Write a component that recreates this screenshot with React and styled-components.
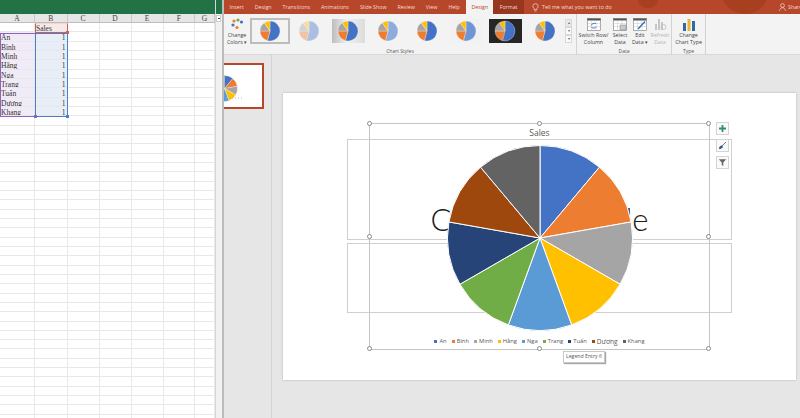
import styled, { createGlobalStyle } from "styled-components";

const GlobalStyle = createGlobalStyle`
html, body { margin: 0; padding: 0; background: #fff; }
body { width: 800px; height: 418px; overflow: hidden; font-family: "Open Sans", "Liberation Sans", sans-serif; }
`;

const Page = styled.div`
display: flex;
width: 800px;
height: 418px;
overflow: hidden;
`;

/* ---------- excel side ---------- */
const Excel = styled.div`
width: 215px;
flex: none;
display: flex;
flex-direction: column;
`;
const TitleBar = styled.div`
height: 14px;
background: #217346;
flex: none;
`;
const Row = styled.div`
display: flex;
flex: none;
height: ${(p) => p.$h || 9.33}px;
box-sizing: border-box;
`;
const HeadCell = styled.div`
width: ${(p) => p.$w}px;
flex: none;
box-sizing: border-box;
background: #e6e6e6;
border-right: 1px solid #c8c8c8;
border-bottom: 1px solid #bdbdbd;
color: #444;
font: 7.5px/9px "Liberation Serif", serif;
text-align: center;
`;
const Cell = styled.div`
width: ${(p) => p.$w}px;
flex: none;
box-sizing: border-box;
border-right: 1px solid #e8e8e8;
border-bottom: 1px solid #e8e8e8;
background: ${(p) => p.$bg || "#fff"};
color: #333;
font: 7.5px/9px "Liberation Serif", serif;
text-align: ${(p) => (p.$num ? "right" : "left")};
padding: 1px 1px 0;
white-space: nowrap;
overflow: hidden;
`;
const RangeMark = styled.div`
position: absolute;
box-sizing: border-box;
left: ${(p) => p.$x}px;
top: ${(p) => p.$y}px;
width: ${(p) => p.$w}px;
height: ${(p) => p.$h}px;
border: 1px solid ${(p) => p.$c};
border-top-color: ${(p) => p.$top || p.$c};
pointer-events: none;
&::after {
  content: "";
  position: absolute;
  right: -2px;
  bottom: -2px;
  width: 3px;
  height: 3px;
  background: ${(p) => p.$c};
}
`;
const Sheet = styled.div`
position: relative;
flex: 1;
overflow: hidden;
`;
const ScrollStrip = styled.div`
width: 9px;
flex: none;
box-sizing: border-box;
background: #f1f1f1;
border-right: 2px solid #bcbcbc;
border-left: 1px solid #d6d6d6;
padding-top: 15px;
background-image: linear-gradient(#217346 14px, transparent 14px);
`;
const CollapseBtn = styled.div`
width: 5px;
height: 7px;
background: #fff;
border: 1px solid #ccc;
box-sizing: border-box;
position: relative;
&::after { content: ""; position: absolute; left: 1px; top: 2px; width: 2px; height: 1px; background: #444; }
`;

/* ---------- powerpoint side ---------- */
const Ppt = styled.div`
flex: 1;
display: flex;
flex-direction: column;
min-width: 0;
`;
const TabBar = styled.div`
height: 14px;
flex: none;
background: #b7472a;
display: flex;
align-items: stretch;
position: relative;
overflow: hidden;
`;
const Tab = styled.div`
position: relative;
padding: 0 ${(p) => p.$pad ?? 6}px;
margin-left: ${(p) => p.$gap ?? 0}px;
font-size: 5.3px;
line-height: 15px;
color: ${(p) => (p.$active ? "#b7472a" : "#f6dcd3")};
background: ${(p) => (p.$active ? "#f3f3f3" : p.$dark ? "#97371f" : "transparent")};
white-space: nowrap;
`;
const TellMe = styled.div`
position: relative;
display: flex;
align-items: center;
gap: 3px;
margin-left: 8px;
font-size: 5.3px;
color: #f6dcd3;
`;
const ShareBox = styled.div`
position: absolute;
left: 555px;
top: 0;
height: 14px;
display: flex;
align-items: center;
gap: 2px;
font-size: 5.3px;
color: #f6dcd3;
`;
const Ornament = styled.div`
position: absolute;
left: ${(p) => p.$x}px;
top: ${(p) => p.$y}px;
width: ${(p) => p.$s}px;
height: ${(p) => p.$s}px;
border-radius: 50%;
background: #a8401f;
`;
const Ribbon = styled.div`
height: 41px;
flex: none;
background: #f3f3f3;
border-bottom: 1px solid #d8d8d8;
box-sizing: border-box;
display: flex;
`;
const Group = styled.div`
width: ${(p) => p.$w}px;
flex: none;
box-sizing: border-box;
border-right: 1px solid #d2d2d2;
padding-top: 1px;
display: flex;
flex-direction: column;
`;
const GroupBody = styled.div`
height: 33px;
flex: none;
display: flex;
align-items: flex-start;
`;
const GroupLabel = styled.div`
font-size: 5px;
line-height: 6px;
color: #555;
text-align: center;
`;
const Big = styled.div`
width: ${(p) => p.$w}px;
flex: none;
display: flex;
flex-direction: column;
align-items: center;
padding-top: 3px;
color: ${(p) => (p.$off ? "#b5b5b5" : "#444")};
font-size: 5.3px;
line-height: 7px;
text-align: center;
white-space: nowrap;
& > svg { margin-bottom: 1px; }
`;
const Gallery = styled.div`
display: flex;
flex: 1;
height: 25px;
margin-top: 3px;
align-items: center;
`;
const StyleSlot = styled.div`
width: 39.3px;
flex: none;
display: flex;
justify-content: center;
`;
const StyleThumb = styled.div`
width: ${(p) => p.$w || 33}px;
height: 24px;
flex: none;
box-sizing: border-box;
display: flex;
align-items: center;
justify-content: center;
background: ${(p) => p.$bg || "transparent"};
border: ${(p) => (p.$selected ? "1px solid #bdbdbd" : "none")};
outline: ${(p) => (p.$selected ? "1px solid #bdbdbd" : "none")};
`;
const GalleryScroll = styled.div`
width: 7px;
flex: none;
display: flex;
flex-direction: column;
margin-left: 1px;
`;
const ScrollKey = styled.div`
height: 8px;
box-sizing: border-box;
border: 1px solid #d8d8d8;
background: ${(p) => (p.$dim ? "#e9e9e9" : "#fafafa")};
color: #666;
font-size: 4px;
line-height: 6px;
text-align: center;
`;
const Work = styled.div`
flex: 1;
display: flex;
background: #e6e6e6;
min-height: 0;
`;
const Thumbs = styled.div`
width: 48px;
flex: none;
box-sizing: border-box;
border-right: 1px solid #d4d4d4;
padding-top: 8px;
`;
const ThumbSlide = styled.div`
width: 40px;
height: 46px;
box-sizing: border-box;
background: #fff;
border: 2px solid #b7472a;
border-left: none;
overflow: hidden;
display: flex;
`;
const Canvas = styled.div`
flex: 1;
padding: 38px 4px 0 11px;
`;
const Slide = styled.div`
position: relative;
width: 513px;
height: 287px;
background: #fff;
box-shadow: 0 0 2px rgba(0, 0, 0, 0.25);
`;
const Placeholder = styled.div`
position: absolute;
box-sizing: border-box;
left: 64px;
top: ${(p) => p.$y}px;
width: 385px;
height: ${(p) => p.$h}px;
border: 1px solid #cfcfcf;
display: flex;
align-items: flex-end;
justify-content: center;
overflow: hidden;
color: #1c1c1c;
font-family: Lato, "Open Sans", sans-serif;
font-weight: 300;
font-size: 31px;
line-height: 36px;
padding-bottom: 2px;
white-space: nowrap;
`;
const ChartBox = styled.div`
position: absolute;
left: 86px;
top: 30px;
width: 341px;
height: 227px;
box-sizing: border-box;
border: 1px solid #c4c4c4;
display: flex;
flex-direction: column;
align-items: center;
`;
const ChartTitle = styled.div`
font-size: 8.5px;
line-height: 12px;
margin-top: 3px;
color: #595959;
`;
const PieWrap = styled.svg`
display: block;
margin-top: 6px;
flex: none;
`;
const Legend = styled.div`
display: flex;
align-items: center;
justify-content: center;
gap: 5px;
margin-top: 6px;
font-size: 5.8px;
line-height: 9px;
color: #595959;
`;
const LegendItem = styled.div`
display: flex;
align-items: center;
gap: 2px;
font-size: ${(p) => (p.$big ? "6.6px" : "inherit")};
`;
const Swatch = styled.span`
width: 3px;
height: 3px;
background: ${(p) => p.$c};
`;
const Handle = styled.div`
position: absolute;
left: ${(p) => p.$x}%;
top: ${(p) => p.$y}%;
width: 5px;
height: 5px;
margin: -3px 0 0 -3px;
box-sizing: border-box;
border: 1px solid #8a8a8a;
border-radius: 50%;
background: #fff;
`;
const SideButtons = styled.div`
position: absolute;
left: 433px;
top: 29px;
display: flex;
flex-direction: column;
gap: 4px;
`;
const SideBtn = styled.div`
width: 13px;
height: 13px;
box-sizing: border-box;
background: #fafafa;
border: 1px solid #d4d4d4;
display: flex;
align-items: center;
justify-content: center;
`;
const Tooltip = styled.div`
position: absolute;
left: 280px;
top: 258px;
height: 10px;
padding: 0 2px;
background: #fff;
border: 1px solid #c8c8c8;
box-shadow: 1px 1px 1px rgba(0, 0, 0, 0.35);
font-size: 5.2px;
line-height: 9px;
color: #555;
white-space: nowrap;
`;

const COLORS = ["#4472C4", "#ED7D31", "#A5A5A5", "#FFC000", "#5B9BD5", "#70AD47", "#264478", "#9E480E", "#636363"];
const NAMES = ["An", "Bình", "Minh", "Hằng", "Nga", "Trang", "Tuấn", "Dương", "Khang"];
const COLS = [["A", 35], ["B", 32.5], ["C", 32], ["D", 32], ["E", 32], ["F", 31.5], ["G", 20]];

function sector(cx, cy, r, from, to) {
  const a = ((from - 90) * Math.PI) / 180;
  const b = ((to - 90) * Math.PI) / 180;
  const large = to - from > 180 ? 1 : 0;
  return `M${cx} ${cy}L${cx + r * Math.cos(a)} ${cy + r * Math.sin(a)}A${r} ${r} 0 ${large} 1 ${cx + r * Math.cos(b)} ${cy + r * Math.sin(b)}Z`;
}

function NinePie({ size, stroke }) {
  const c = size / 2;
  return (
    <>
      {COLORS.map((col, i) => (
        <path key={col} d={sector(c, c, c - 0.5, i * 40, (i + 1) * 40)} fill={col} stroke="#fff" strokeWidth={stroke} />
      ))}
    </>
  );
}

function MiniPie({ faded, tone = "#4472C4", r = 10 }) {
  const c = r + 1;
  const parts = [
    [0, 195, tone],
    [195, 270, "#ED7D31"],
    [270, 325, "#A5A5A5"],
    [325, 360, "#FFC000"],
  ];
  return (
    <svg width={c * 2} height={c * 2} style={{ opacity: faded ? 0.4 : 1 }}>
      {parts.map(([a, b, col]) => (
        <path key={a} d={sector(c, c, r, a, b)} fill={col} stroke="#fff" strokeWidth="0.3" />
      ))}
    </svg>
  );
}

function SheetIcon({ children }) {
  return (
    <svg width="14" height="13" viewBox="0 0 14 13">
      <rect x="0.5" y="0.5" width="13" height="12" fill="#fff" stroke="#777" strokeWidth="0.6" />
      <rect x="0.5" y="0.5" width="13" height="2" fill="#555" />
      <path d="M0.5 5.5h13M0.5 8.5h13M4.5 2.5v10M9 2.5v10" stroke="#bbb" strokeWidth="0.4" />
      {children}
    </svg>
  );
}

function App() {
  const rows = Array.from({ length: 43 });
  const thumbs = [
    { selected: true, w: 38 },
    { faded: true },
    { bg: "linear-gradient(90deg,#bdbdbd,#f0f0f0 45%,#dcdcdc)" },
    { tone: "#8faadc" },
    {},
    { bg: "#f1f1f1", tone: "#6f95d4" },
    { bg: "#262626" },
    {},
  ];
  return (
    <Page>
      <GlobalStyle />
      <Excel>
        <TitleBar />
        <Row $h={9}>
          {COLS.map(([n, w]) => (
            <HeadCell key={n} $w={w}>{n}</HeadCell>
          ))}
        </Row>
        <Sheet>
          {rows.map((_, r) => (
            <Row key={r}>
              {COLS.map(([n, w], c) => {
                const name = NAMES[r - 1];
                let text = "";
                let bg;
                if (r === 0 && c === 1) { text = "Sales"; bg = "#f8e8e6"; }
                if (name && c === 0) { text = name; bg = "#f1ebf7"; }
                if (name && c === 1) { text = "1"; bg = "#e7eef8"; }
                return (
                  <Cell key={n} $w={w} $bg={bg} $num={c === 1 && r > 0}>{text}</Cell>
                );
              })}
            </Row>
          ))}
          <RangeMark $x={0} $y={9.5} $w={35.5} $h={84.5} $c="#8e63c2" />
          <RangeMark $x={35} $y={9.5} $w={33} $h={84.5} $c="#4a7ec9" />
          <RangeMark $x={35} $y={0} $w={33} $h={10} $c="#c9605c" $top="#f3d5d2" />
        </Sheet>
      </Excel>
      <ScrollStrip><CollapseBtn /></ScrollStrip>
      <Ppt>
        <TabBar>
          <Ornament $x={413} $y={-14} $s={22} />
          <Ornament $x={497} $y={-34} $s={48} />
          {["Insert", "Design", "Transitions", "Animations", "Slide Show", "Review", "View", "Help"].map((t) => (
            <Tab key={t} $pad={5.5}>{t}</Tab>
          ))}
          <Tab $active $pad={5} $gap={1}>Design</Tab>
          <Tab $dark $pad={6.5}>Format</Tab>
          <TellMe>
            <svg width="7" height="9" viewBox="0 0 7 9">
              <path d="M3.5.6a2.6 2.6 0 0 0-1.4 4.8v1.2h2.8V5.4A2.6 2.6 0 0 0 3.5.6zM2.4 8h2.2" fill="none" stroke="#f6dcd3" strokeWidth="0.7" />
            </svg>
            Tell me what you want to do
          </TellMe>
          <ShareBox>
            <svg width="7" height="8" viewBox="0 0 7 8">
              <circle cx="3.5" cy="2.5" r="1.9" fill="none" stroke="#f6dcd3" strokeWidth="0.7" />
              <path d="M.5 7.8c.3-2 1.4-3 3-3s2.7 1 3 3" fill="none" stroke="#f6dcd3" strokeWidth="0.7" />
            </svg>
            Share
          </ShareBox>
        </TabBar>
        <Ribbon>
          <Group $w={353}>
            <GroupBody>
              <Big $w={26}>
                <svg width="13" height="13" viewBox="0 0 13 13">
                  <circle cx="3" cy="3" r="1.6" fill="#ED7D31" />
                  <circle cx="7" cy="2" r="1.6" fill="#70AD47" />
                  <circle cx="10.5" cy="4" r="1.6" fill="#4472C4" />
                  <circle cx="2" cy="7" r="1.6" fill="#4472C4" />
                  <circle cx="6" cy="9.5" r="1.6" fill="#ED7D31" />
                </svg>
                <span>Change</span>
                <span>Colors ▾</span>
              </Big>
              <Gallery>
                {thumbs.map((t, i) => (
                  <StyleSlot key={i}>
                    <StyleThumb $selected={t.selected} $w={t.w} $bg={t.bg}>
                      <MiniPie faded={t.faded} tone={t.tone} />
                    </StyleThumb>
                  </StyleSlot>
                ))}
                <GalleryScroll>
                  <ScrollKey $dim>▴</ScrollKey>
                  <ScrollKey>▾</ScrollKey>
                  <ScrollKey>▾</ScrollKey>
                </GalleryScroll>
              </Gallery>
            </GroupBody>
            <GroupLabel>Chart Styles</GroupLabel>
          </Group>
          <Group $w={95}>
            <GroupBody>
              <Big $w={33}>
                <SheetIcon>
                  <path d="M4 7.5c1-2 3-2.500 5-2M9.500 9c-1 1-3 1.500-5 .5" fill="none" stroke="#2b6fb8" strokeWidth="0.9" />
                </SheetIcon>
                <span>Switch Row/</span>
                <span>Column</span>
              </Big>
              <Big $w={20}>
                <SheetIcon><rect x="7" y="7" width="6" height="5" fill="#c9c9c9" stroke="#777" strokeWidth="0.4" /></SheetIcon>
                <span>Select</span>
                <span>Data</span>
              </Big>
              <Big $w={20}>
                <SheetIcon><path d="M5 11l7-7.500" stroke="#2b6fb8" strokeWidth="1.4" /></SheetIcon>
                <span>Edit</span>
                <span>Data ▾</span>
              </Big>
              <Big $w={20} $off>
                <svg width="14" height="13" viewBox="0 0 14 13">
                  <path d="M2 12V6h2v6zM5 12V1h2v11zM8 12V4h2v8z" fill="#c6c6c6" />
                  <circle cx="10.500" cy="9" r="2.500" fill="none" stroke="#bbb" strokeWidth="0.8" />
                </svg>
                <span>Refresh</span>
                <span>Data</span>
              </Big>
            </GroupBody>
            <GroupLabel>Data</GroupLabel>
          </Group>
          <Group $w={34}>
            <GroupBody>
              <Big $w={33}>
                <svg width="14" height="13" viewBox="0 0 14 13">
                  <rect x="1" y="5" width="3" height="8" fill="#2f6aa8" />
                  <rect x="5.500" y="1" width="3" height="12" fill="#e9b23c" />
                  <rect x="10" y="3" width="3" height="10" fill="#2f6aa8" />
                </svg>
                <span>Change</span>
                <span>Chart Type</span>
              </Big>
            </GroupBody>
            <GroupLabel>Type</GroupLabel>
          </Group>
        </Ribbon>
        <Work>
          <Thumbs>
            <ThumbSlide>
              <svg width="38" height="42" viewBox="0 0 38 42">
                <g transform="translate(-13 10)"><NinePie size={27} stroke={0.3} /></g>
                <path d="M2 33h16" stroke="#b5b5b5" strokeWidth="1" strokeDasharray="1 2" />
              </svg>
            </ThumbSlide>
          </Thumbs>
          <Canvas>
            <Slide>
              <Placeholder $y={46} $h={101}>Click to add title</Placeholder>
              <Placeholder $y={150} $h={70} />
              <ChartBox>
                <ChartTitle>Sales</ChartTitle>
                <PieWrap width="186" height="186" viewBox="0 0 186 186">
                  <NinePie size={186} stroke={1} />
                </PieWrap>
                <Legend>
                  {NAMES.map((n, i) => (
                    <LegendItem key={n} $big={n === "Dương"}>
                      <Swatch $c={COLORS[i]} />
                      {n}
                    </LegendItem>
                  ))}
                </Legend>
                {[[0, 0], [50, 0], [100, 0], [0, 50], [100, 50], [0, 100], [50, 100], [100, 100]].map(([x, y]) => (
                  <Handle key={`${x}-${y}`} $x={x} $y={y} />
                ))}
              </ChartBox>
              <SideButtons>
                <SideBtn>
                  <svg width="9" height="9" viewBox="0 0 9 9"><path d="M4.500 1v7M1 4.500h7" stroke="#2f8f6b" strokeWidth="1.800" /></svg>
                </SideBtn>
                <SideBtn>
                  <svg width="9" height="9" viewBox="0 0 9 9"><path d="M8 1L4 5" stroke="#777" strokeWidth="1" /><path d="M1 8c0-2 1-3.500 3-3.500L5 6C4 7.500 3 8 1 8z" fill="#3d5a80" /></svg>
                </SideBtn>
                <SideBtn>
                  <svg width="9" height="9" viewBox="0 0 9 9"><path d="M.8 1.200h7.400L5.300 4.500V8L3.700 7V4.500z" fill="#666" /></svg>
                </SideBtn>
              </SideButtons>
              <Tooltip>Legend Entry 6</Tooltip>
            </Slide>
          </Canvas>
        </Work>
      </Ppt>
    </Page>
  );
}

export default App;
